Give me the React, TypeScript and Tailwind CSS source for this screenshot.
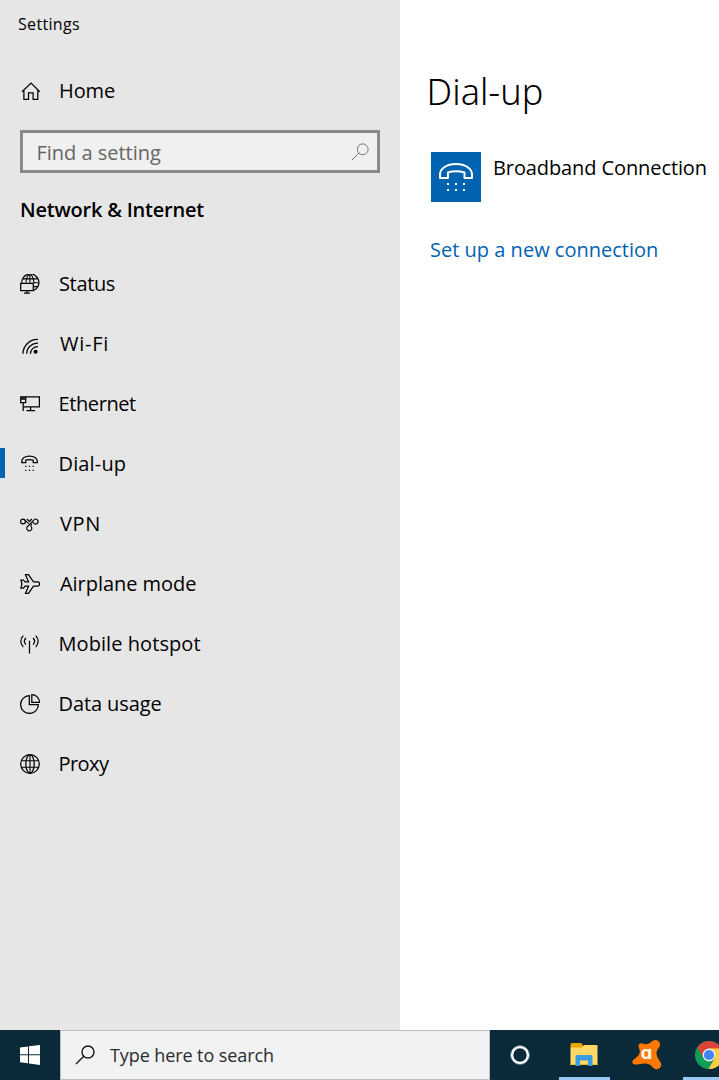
import React from "react";

type IconProps = { className?: string };

const strokeProps = {
  fill: "none",
  stroke: "currentColor",
  strokeWidth: 1.25,
} as const;

function HomeIcon() {
  return (
    <svg className="h-5 w-5" viewBox="0 0 20 20" {...strokeProps}>
      <path d="M2 10.700 11 2.100 19.800 10.700M3.900 9.100v9.200h4.600v-6.500h4.600v6.500h4.700V9.100" />
    </svg>
  );
}

function SearchIcon({ className }: IconProps) {
  return (
    <svg className={className} viewBox="0 0 20 20" fill="none" stroke="currentColor">
      <circle cx="13" cy="7" r="6" />
      <path d="M8.8 11.2 1 19" />
    </svg>
  );
}

function StatusIcon() {
  return (
    <svg className="h-5 w-5" viewBox="0 0 20 20" {...strokeProps}>
      <path d="M1.700 8.800A8.600 8.600 0 1 1 14 16.300M2.700 4.900h14.400M13.500 12.500h4.400" />
      <path d="M5.900 8.800C6.300 4 8 .7 9.900.7s3.600 3.200 4 8M9.900.7v8.100M13.500 8.800h4.900" strokeWidth="1.100" />
      <path d="M.7 9.300h12.600v7.400H.7zM7 16.700v2.500M4 19.200h6" />
    </svg>
  );
}

function WifiIcon() {
  return (
    <svg className="h-5 w-5" viewBox="0 0 20 20" {...strokeProps}>
      <path d="M2.900 19.800A14.500 14.500 0 0 1 18 5.500M6.700 19.800A10.800 10.800 0 0 1 18 9.100M10.400 19.800A7.300 7.300 0 0 1 18 12.600" />
      <circle cx="15.600" cy="17.800" r="2" fill="currentColor" stroke="none" />
    </svg>
  );
}

function EthernetIcon() {
  return (
    <svg className="h-5 w-5" viewBox="0 0 20 20" {...strokeProps}>
      <path d="M5.700 2.800h13.700v10.100H3.500M10.600 13v3.500M6.400 16.500H15" />
      <path d="M.7 2.800h5v5.900h-5zM.7 5h1.700M4 5h1.700M2.400 2.800V5H4V2.800M3.200 8.700v8.300" />
    </svg>
  );
}

function PhoneIcon() {
  return (
    <svg className="h-5 w-5" viewBox="0 0 20 20" {...strokeProps}>
      <path d="M1.800 8.700V7.200C1.800 4.300 5 2 9.500 2s7.800 2.300 7.800 5.200v1.500h-4.100V6.100c-2.400-.7-5-.7-7.400 0v2.600z" strokeLinejoin="round" />
      <path d="M5.200 12.300h1.200M8.900 12.300h1.200M12.600 12.300h1.200M5.200 16.400h1.200M8.900 16.400h1.200M12.600 16.400h1.200" strokeWidth="1.200" />
    </svg>
  );
}

function VpnIcon() {
  return (
    <svg className="h-5 w-5" viewBox="0 0 20 20" fill="none" stroke="currentColor" strokeWidth="1.150">
      <circle cx="3" cy="7.500" r="2.400" />
      <path d="M4.700 5.800 8.700 9.700M7 5l2.400 2.400L11.800 5" />
      <path d="M14 5.800 7.600 12.500a2.500 2.500 0 1 0 3.500.1c-.5-1-.2-1.900.6-2.800" />
      <path d="M14 5.800a2.400 2.400 0 1 1 0 3.500l-1.500-1.200" />
    </svg>
  );
}

function AirplaneIcon() {
  return (
    <svg className="h-5 w-5" viewBox="0 0 20 20" {...strokeProps}>
      <path d="M8.600 7.900 5.500.7h3l5 7.200h4a2.100 2.100 0 0 1 0 4.200h-4l-5 7.200h-3l3.100-7.200H5.200L3.400 14H.9l1-4-1-4h2.500l1.800 1.900z" />
    </svg>
  );
}

function HotspotIcon() {
  return (
    <svg className="h-5 w-5" viewBox="0 0 20 20" {...strokeProps}>
      <path d="M9.500 6.700v12.800M3.300 1.600c-3.300 3.400-3.300 8.100 0 11.400M15.700 1.600c3.300 3.400 3.300 8.100 0 11.400M5.900 4c-1.900 2-1.900 4.600 0 6.600M13.100 4c1.900 2 1.900 4.600 0 6.600" />
    </svg>
  );
}

function DataIcon() {
  return (
    <svg className="h-5 w-5" viewBox="0 0 20 20" {...strokeProps}>
      <path d="M9.300 1.600a8.900 8.900 0 1 0 9.100 9H9.300z" />
      <path d="M11.800.7c4.200 0 7.600 3.200 7.600 7.600h-7.600z" />
    </svg>
  );
}

function GlobeIcon() {
  return (
    <svg className="h-5 w-5" viewBox="0 0 20 20" {...strokeProps}>
      <circle cx="10" cy="10" r="9.300" />
      <ellipse cx="10" cy="10" rx="4.200" ry="9.300" />
      <path d="M10 .7v18.600M1.500 6.800h17M1.500 13.200h17" strokeWidth="1.100" />
    </svg>
  );
}

type NavItem = {
  label: string;
  icon: () => React.JSX.Element;
  text: string;
  active?: boolean;
};

const navItems: NavItem[] = [
  { label: "Status", icon: StatusIcon, text: "pt-0.5 pl-[19px] tracking-[-0.36px]" },
  { label: "Wi-Fi", icon: WifiIcon, text: "pt-0.5 pl-[20px] tracking-[0.75px]" },
  { label: "Ethernet", icon: EthernetIcon, text: "pt-0.5 pl-[18.5px] tracking-[-0.4px]" },
  { label: "Dial-up", icon: PhoneIcon, text: "pt-0.5 pl-[18.5px] tracking-[0.15px]", active: true },
  { label: "VPN", icon: VpnIcon, text: "pt-0.5 pl-[20px] tracking-[0.67px]" },
  { label: "Airplane mode", icon: AirplaneIcon, text: "pt-0.5 pl-[20px] tracking-[-0.04px]" },
  { label: "Mobile hotspot", icon: HotspotIcon, text: "pt-0.5 pl-[18.5px] tracking-[0.07px]" },
  { label: "Data usage", icon: DataIcon, text: "pt-0.5 pl-[18.5px] tracking-[-0.1px]" },
  { label: "Proxy", icon: GlobeIcon, text: "pt-0.5 pl-[18.5px] tracking-[-0.55px]" },
];

function Sidebar() {
  return (
    <aside className="flex w-[400px] shrink-0 flex-col bg-[#e6e6e6]">
      <div className="flex h-12 items-center pl-[18px] text-[16px] tracking-[0.33px]">Settings</div>
      <div className="mt-[13px] flex h-[60px] items-center pl-5">
        <HomeIcon />
        <span className="pl-[19px] tracking-[-0.1px]">Home</span>
      </div>
      <div className="mx-5 mt-[9px] flex h-[43px] items-center justify-between border-[3px] border-[#8a8a8a] bg-[#f0f0f0] pr-2 pl-[13.5px] text-[#666]">
        <span className="pt-0.5 tracking-[-0.02px]">Find a setting</span>
        <SearchIcon className="h-[18px] w-[18px]" />
      </div>
      <h2 className="mt-[7px] flex h-[60px] items-center pl-[20px] font-semibold tracking-[-0.22px]">
        Network &amp; Internet
      </h2>
      <nav className="mt-[13px] flex flex-col">
        {navItems.map(({ label, icon: Icon, text, active }) => (
          <a key={label} className="flex h-[60px] items-center">
            <span className={active ? "h-[30px] w-[5px] bg-[#0063b1]" : "h-[30px] w-[5px]"} />
            <span className="pt-0.5 pl-[15px]">
              <Icon />
            </span>
            <span className={text}>{label}</span>
          </a>
        ))}
      </nav>
    </aside>
  );
}

function Content() {
  return (
    <main className="flex min-w-0 flex-1 flex-col bg-white whitespace-nowrap">
      <h1 className="mt-[62px] flex h-[60px] items-center pl-[26.5px] font-['Noto_Sans','Open_Sans',sans-serif] text-[36px] font-light tracking-[0.1px]">
        Dial-up
      </h1>
      <div className="mt-[30px] flex pl-[31px]">
        <div className="h-[50px] w-[50px] bg-[#0063b1] text-white">
          <svg className="h-[50px] w-[50px]" viewBox="0 0 50 50" fill="none" stroke="currentColor" strokeWidth="2">
            <path d="M9 26v-3.500C9 16.500 16 12 25 12s16 4.500 16 10.500V26h-7.500v-5.500c-5-1.400-12-1.400-16.500 0V26z" strokeLinejoin="round" />
            <path d="M16 32h2M24 32h2M32 32h2M16 38h2M24 38h2M32 38h2" />
          </svg>
        </div>
        <span className="flex h-8 items-center pl-[12px] tracking-[-0.1px]">Broadband Connection</span>
      </div>
      <a className="mt-[32px] flex h-8 items-center pl-[30px] tracking-[0.01px] text-[#0063b1]">
        Set up a new connection
      </a>
    </main>
  );
}

function WindowsLogo() {
  return (
    <svg className="h-5 w-5" viewBox="0 0 20 20" fill="#fff">
      <path d="M0 2.600 8 1.500v7.800H0zM9 1.300 20 0v9.300H9zM0 10.300h8v7.900L0 17.200zM9 10.300h11V20L9 18.400z" />
    </svg>
  );
}

function FolderIcon() {
  return (
    <svg className="h-6 w-7" viewBox="0 0 28 24">
      <path d="M.5 1.500Q.5 0 2 0h9l2 2v4H.5z" fill="#e6a600" />
      <path d="M.5 4.500H12L14 2h12.500q1 0 1 1v19H.5z" fill="#ffd965" />
      <path d="M.5 21h27v1H.5z" fill="#f4bd32" />
      <path d="M5.500 23V13.500q0-1.500 1.500-1.500h14q1.500 0 1.500 1.500V23h-4.500v-5.500h-8V23z" fill="#3a9be0" />
    </svg>
  );
}

function AvastIcon() {
  return (
    <svg className="h-[30px] w-[30px]" viewBox="0 0 30 30">
      <path
        d="M6.500 6c0-2 2-3.200 4-2.500 3 1 6 1.200 9-1.700 2-2 4.500-2.300 6.500-1 2.500 1.700 2.600 4.700.8 7-2.300 3-3.400 6-.8 10.500l2.500 4c2 3.500-.5 7-4 7-3 0-4-2.500-6-4.200-2.500-2-6-2-10.500-1.200C4.500 24.500 1 25.500.4 22.600 0 20 2 19.500 4 17.800 6.500 15.500 8.500 13.500 7.500 9.500z"
        fill="#ff7800"
      />
      <text x="14.500" y="18.500" textAnchor="middle" fill="#fff" fontSize="18" fontWeight="700" fontFamily="Inter, sans-serif">
        ɑ
      </text>
    </svg>
  );
}

function ChromeIcon() {
  return (
    <svg className="h-7 w-7" viewBox="0 0 28 28">
      <circle cx="14" cy="14" r="14" fill="#109d58" />
      <path d="M14 14 1.900 7A14 14 0 0 1 26.100 7z" fill="#db4437" />
      <path d="M14 7.500h12.500A14 14 0 0 1 13.500 28l6.300-11z" fill="#ffcd40" />
      <path d="M2.400 6.200 8.500 17 14 7.500z" fill="#db4437" />
      <circle cx="14" cy="14" r="6.400" fill="#f1f1f1" />
      <circle cx="14" cy="14" r="5.100" fill="#4285f4" />
    </svg>
  );
}

function Taskbar() {
  return (
    <footer className="flex h-[50px] w-[719px] overflow-hidden bg-[#0a2a39]">
      <div className="flex w-[60px] shrink-0 items-center justify-center">
        <WindowsLogo />
      </div>
      <div className="flex w-[430px] shrink-0 items-center border border-[#bdbfc1] bg-[#f1f2f4] pl-[14px]">
        <SearchIcon className="h-5 w-5 stroke-[1.4px] text-[#1a1a1a]" />
        <span className="pl-[15px] text-[18px] tracking-[-0.09px] text-[#2b2b2b]">Type here to search</span>
      </div>
      <div className="flex w-[60px] shrink-0 items-center justify-center">
        <svg className="h-5 w-5" viewBox="0 0 20 20" fill="none">
          <circle cx="10" cy="10" r="9.300" stroke="#85959c" strokeWidth="1" />
          <circle cx="10" cy="10" r="7.900" stroke="#fff" strokeWidth="2.400" />
        </svg>
      </div>
      <div className="ml-[9px] flex w-[51px] shrink-0 items-center justify-center border-b-[3px] border-[#99c8f2] pt-[3px] pr-[2px]">
        <FolderIcon />
      </div>
      <div className="flex w-[73px] shrink-0 items-center justify-center">
        <AvastIcon />
      </div>
      <div className="flex w-[51px] shrink-0 items-center justify-center border-b-[3px] border-[#99c8f2] pt-[3px]">
        <ChromeIcon />
      </div>
    </footer>
  );
}

export default function App() {
  return (
    <div className="flex h-[1080px] w-[719px] flex-col overflow-hidden font-['Open_Sans','Noto_Sans',sans-serif] text-[20px] leading-none text-black">
      <div className="flex flex-1">
        <Sidebar />
        <Content />
      </div>
      <Taskbar />
    </div>
  );
}
